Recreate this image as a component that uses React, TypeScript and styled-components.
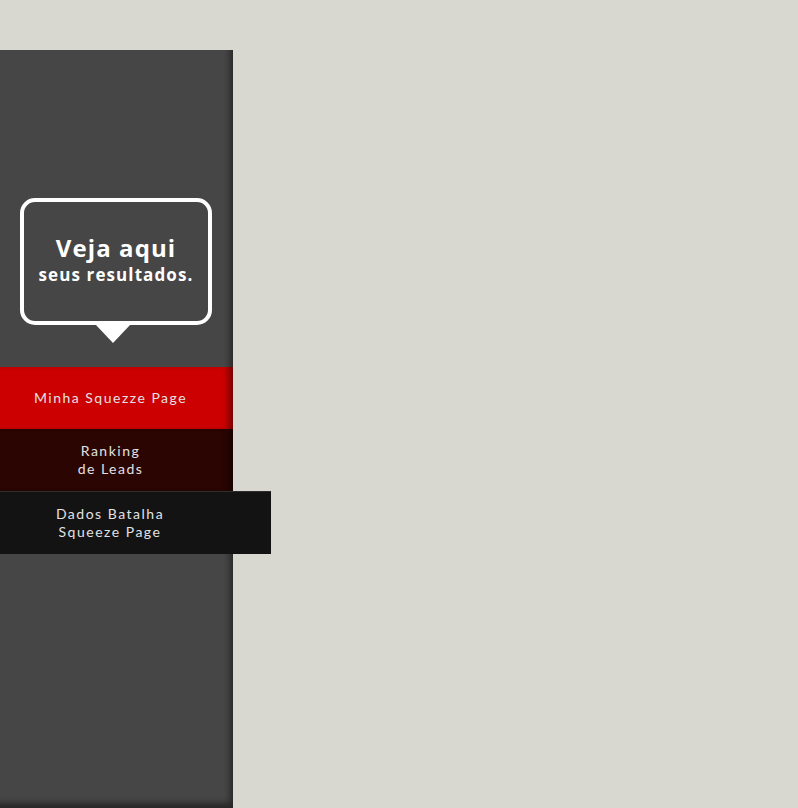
import React from 'react';
import styled, { createGlobalStyle } from 'styled-components';

const GlobalStyle = createGlobalStyle`
  html, body {
    margin: 0;
    padding: 0;
    background-color: #d8d8d0;
    font-family: 'Lato', 'Liberation Sans', sans-serif;
  }
`;

const Page = styled.div`
  width: 798px;
  height: 808px;
  padding-top: 50px;
  box-sizing: border-box;
  overflow: hidden;
`;

const Sidebar = styled.nav`
  width: 233px;
  height: 758px;
  background-color: #464646;
  box-shadow: inset -6px -8px 6px -3px rgba(0, 0, 0, 0.45);
  padding-top: 148px;
  box-sizing: border-box;
`;

const Bubble = styled.div`
  position: relative;
  width: 192px;
  height: 127px;
  margin-left: 20px;
  box-sizing: border-box;
  border: 4px solid #fff;
  border-radius: 15px;
  display: flex;
  flex-direction: column;
  align-items: center;
  justify-content: center;
  color: #fff;
  font-family: 'Open Sans', 'Liberation Sans', sans-serif;
  font-weight: 700;
  padding-bottom: 2px;

  &::after {
    content: '';
    position: absolute;
    left: 72px;
    bottom: -22px;
    border-left: 17px solid transparent;
    border-right: 17px solid transparent;
    border-top: 18px solid #fff;
  }
`;

const BubbleTitle = styled.div`
  font-size: 24px;
  line-height: 26px;
  letter-spacing: 1.1px;
`;

const BubbleSub = styled.div`
  font-size: 17px;
  line-height: 24px;
  letter-spacing: 1.1px;
  margin-top: 2px;
`;

const Menu = styled.ul`
  list-style: none;
  margin: 42px 0 0;
  padding: 0;
`;

const Item = styled.li<{ $bg: string; $active?: boolean }>`
  width: ${p => (p.$active ? '271px' : '233px')};
  height: ${p => (p.$active ? '63px' : '62px')};
  box-sizing: border-box;
  padding-right: ${p => (p.$active ? '51px' : '12px')};
  background-color: ${p => p.$bg};
  box-shadow: ${p =>
    p.$active ? 'none' : 'inset -8px 0 7px -4px rgba(0, 0, 0, 0.45)'};
  border-top: ${p => (p.$active ? '1px solid #2e2e2e' : 'none')};
  display: flex;
  align-items: center;
  justify-content: center;
  text-align: center;
  color: #e2e2e2;
  font-size: 14px;
  font-weight: 400;
  line-height: 18px;
  letter-spacing: 1.5px;
  cursor: pointer;
`;

export default function App(): JSX.Element {
  return (
    <Page>
      <GlobalStyle />
      <Sidebar>
        <Bubble>
          <BubbleTitle>Veja aqui</BubbleTitle>
          <BubbleSub>seus resultados.</BubbleSub>
        </Bubble>
        <Menu>
          <Item $bg="#cc0000">Minha Squezze Page</Item>
          <Item $bg="#2a0502">
            Ranking
            <br />
            de Leads
          </Item>
          <Item $bg="#131313" $active>
            Dados Batalha
            <br />
            Squeeze Page
          </Item>
        </Menu>
      </Sidebar>
    </Page>
  );
}
